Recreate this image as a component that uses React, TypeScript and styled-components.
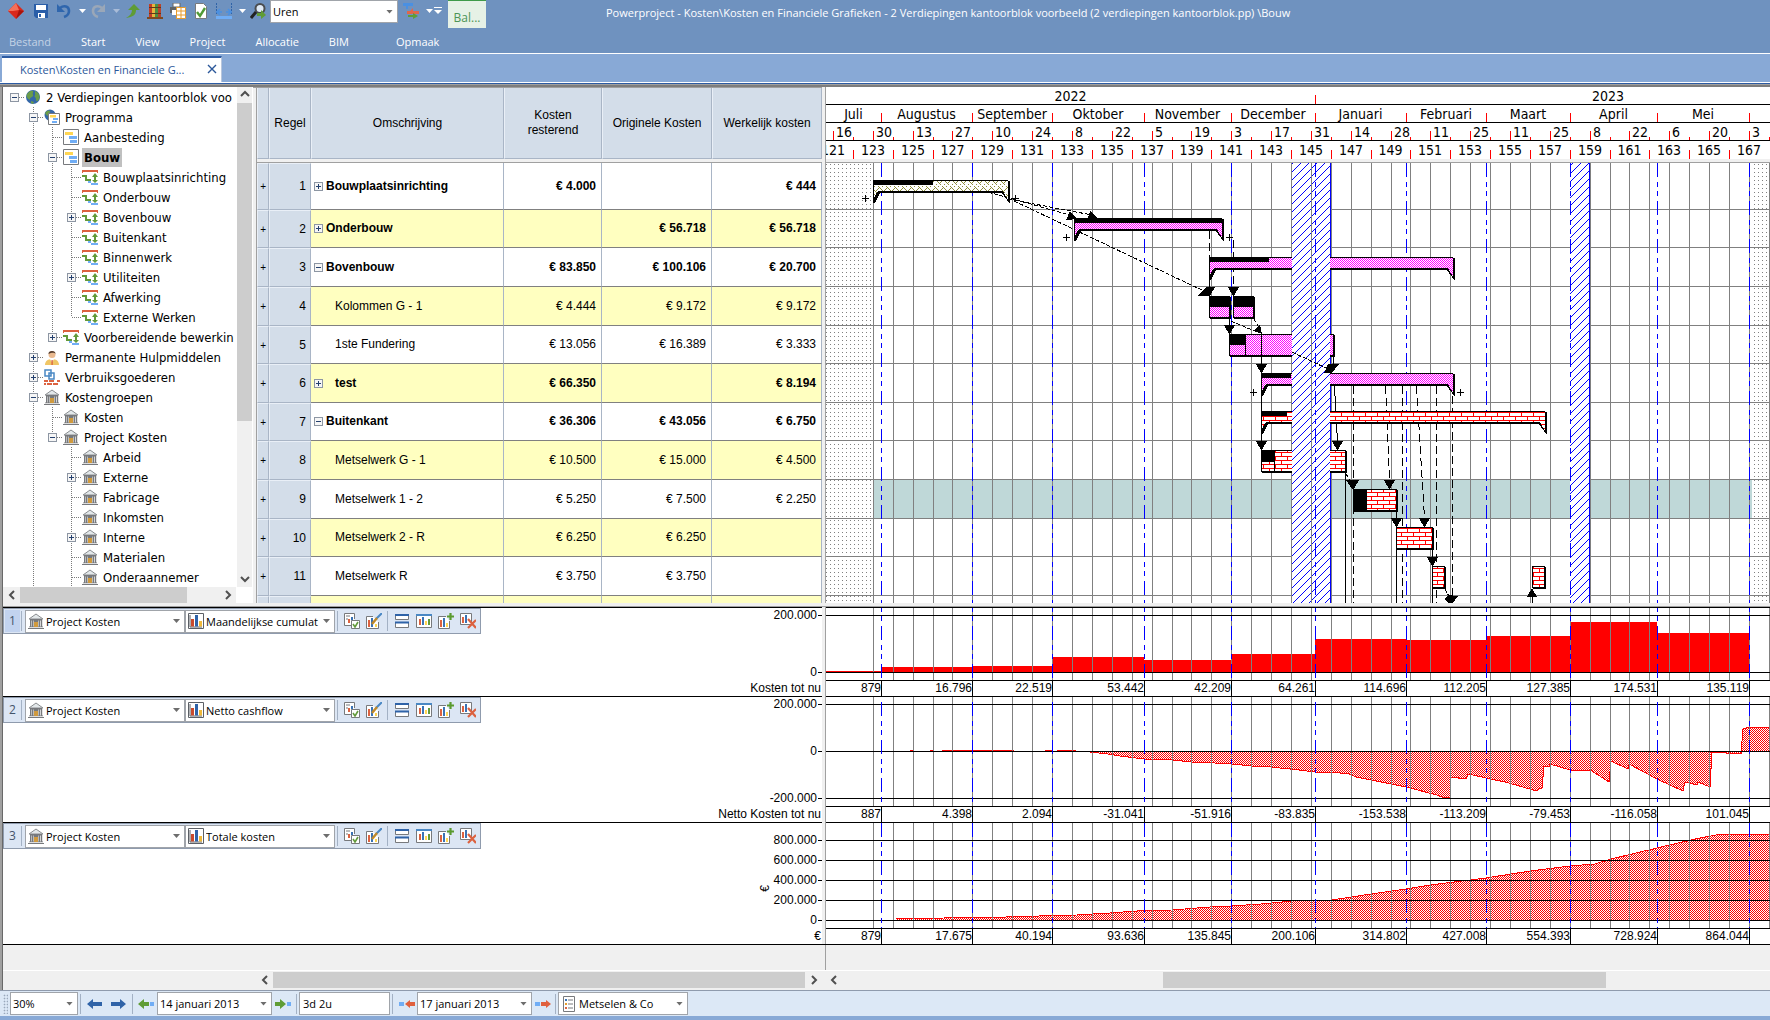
import React from "react";
import styled, { createGlobalStyle, css } from "styled-components";

const ui = `"Open Sans", "Noto Sans", sans-serif`;
const tahoma = `"DejaVu Sans Condensed", "DejaVu Sans", sans-serif`;
const arial = `"Liberation Sans", Arial, sans-serif`;

const Global = createGlobalStyle`
  * { box-sizing: border-box; }
  body { margin: 0; overflow: hidden; background: #f0f0f0; }
  button { border: 0; padding: 0; margin: 0; background: none; font: inherit; color: inherit; cursor: pointer; }
  svg { display: block; }
`;

const Shell = styled.div`
  display: flex;
  flex-direction: column;
  height: 100vh;
  font-family: ${ui};
  font-size: 11px;
  color: #000;
`;

/* ---------- ribbon ---------- */

const Ribbon = styled.header`
  background: #6f92bf;
  border-bottom: 1px solid #fff;
  color: #fff;
`;
const QuickBar = styled.div`
  display: flex;
  align-items: flex-start;
  height: 28px;
  padding-left: 3px;
`;
const QuickButton = styled.button<{ $w?: number }>`
  display: grid;
  place-items: center;
  width: ${(p) => p.$w ?? 23}px;
  height: 22px;
`;
const BalTab = styled.button`
  width: 38px;
  height: 28px;
  margin-left: 4px;
  padding-top: 6px;
  border-top: 1px solid #3f9a4a;
  background: #e6f1e6;
  color: #4c9455;
  font-size: 12px;
`;
const Title = styled.h1`
  flex: 1;
  margin: 0;
  padding-left: 120px;
  font-size: 11px;
  font-weight: 400;
  line-height: 26px;
  white-space: nowrap;
`;
const Menu = styled.nav`
  display: flex;
  gap: 30px;
  height: 25px;
  padding-left: 9px;
`;
const MenuItem = styled.button<{ $dim?: boolean; $push?: number }>`
  height: 27px;
  margin-right: ${(p) => p.$push ?? 0}px;
  color: ${(p) => (p.$dim ? "#c3d2e6" : "#fff")};
  line-height: 26px;
`;
const TabStrip = styled.div`
  display: flex;
  align-items: flex-end;
  height: 29px;
  padding-left: 2px;
  background: #88a9d6;
  border-bottom: 1px solid #fff;
`;
const DocTab = styled.div`
  display: flex;
  align-items: center;
  justify-content: space-between;
  width: 220px;
  height: 26px;
  padding: 0 4px 2px 18px;
  border-top: 2px solid #2c5ba3;
  border-right: 1px solid #b8c6dc;
  background: #fff;
  color: #2b579a;
`;
const Frame = styled.div`
  flex: none;
  height: 4px;
  border-top: 1px solid #2c5ba3;
  border-bottom: 2px solid #7d7d7d;
  background: #a0a0a0;
`;

/* ---------- panes ---------- */

const Work = styled.main`
  display: flex;
  flex: 1;
  flex-direction: column;
  min-height: 0;
  border-left: 2px solid #a0a0a0;
  box-shadow: inset 1px 0 0 #696969;
  padding-left: 1px;
`;
const Upper = styled.div`
  display: flex;
  flex: none;
  height: 516px;
  overflow: hidden;
`;
const TreePane = styled.aside`
  display: flex;
  flex: none;
  flex-direction: column;
  width: 250px;
  padding-right: 1px;
  background: #fff;
`;
const TreeMain = styled.div`
  display: flex;
  height: 500px;
`;
const TreeList = styled.ul`
  flex: 1;
  margin: 0;
  padding: 0 0 0 2px;
  list-style: none;
  overflow: hidden;
  font-family: ${tahoma};
  font-size: 13px;
`;
const TreeItem = styled.li`
  display: flex;
  align-items: center;
  height: 20px;
  white-space: nowrap;
`;
const vdots = "repeating-linear-gradient(to bottom,#7a7a7a 0 1px,transparent 1px 2px)";
const hdots = "repeating-linear-gradient(to right,#7a7a7a 0 1px,transparent 1px 2px)";
const Guide = styled.span<{ $v: "full" | "top" | "none"; $h: boolean }>`
  display: grid;
  flex: none;
  place-items: center;
  width: 19px;
  height: 20px;
  background-repeat: no-repeat;
  background-position: 9px 0, 10px 10px;
  ${(p) => css`
    background-image: ${vdots}, ${hdots};
    background-size: ${p.$v === "none" ? "0 0" : p.$v === "top" ? "1px 10px" : "1px 20px"},
      ${p.$h ? "9px 1px" : "0 0"};
  `}
`;
const Toggle = styled.button`
  width: 9px;
  height: 9px;
`;
const TreeIcon = styled.span`
  flex: none;
  width: 16px;
  height: 16px;
  margin: 0 3px 0 1px;
`;
const TreeLabel = styled.span<{ $sel?: boolean }>`
  height: 19px;
  padding: 0 2px;
  line-height: 19px;
  ${(p) => p.$sel && "background:#c0c0c0;font-weight:700;"}
`;
const VScroll = styled.div`
  display: flex;
  flex: none;
  flex-direction: column;
  width: 15px;
  background: #f0f0f0;
`;
const HScroll = styled.div<{ $w?: string }>`
  display: flex;
  width: ${(p) => p.$w ?? "auto"};
  height: 16px;
  background: #f0f0f0;
`;
const ScrollButton = styled.button`
  display: grid;
  flex: none;
  place-items: center;
  width: 17px;
  height: 16px;
`;
const UpDownButton = styled(ScrollButton)`
  width: 15px;
`;
const Track = styled.div<{ $before: number }>`
  display: flex;
  flex: 1;
  padding-left: ${(p) => p.$before}%;
`;
const Thumb = styled.div<{ $w?: string; $h?: string }>`
  width: ${(p) => p.$w ?? "100%"};
  height: ${(p) => p.$h ?? "100%"};
  background: #cdcdcd;
`;

/* ---------- table ---------- */

const TablePane = styled.section`
  flex: none;
  width: 569px;
  padding-left: 3px;
  border-top: 1px solid #a0a0a0;
  background: #f0f0f0;
`;
const Sheet = styled.table`
  width: 566px;
  table-layout: fixed;
  border-collapse: separate;
  border-spacing: 0;
  border-left: 1px solid #a0a0a0;
  font-family: ${arial};
  font-size: 12px;
  line-height: 15px;
`;
const Th = styled.th`
  height: 71px;
  padding: 0 4px;
  border-right: 1px solid #a9b5c6;
  border-bottom: 1px solid #a9b5c6;
  border-left: 1px solid #e9eff7;
  background: #d3dde9;
  font-weight: 400;
`;
const SplitCell = styled.td`
  height: 4px;
  padding: 0;
  border-bottom: 1px solid #a0a0a0;
  background: #f0f0f0;
`;
const SheetRow = styled.tr<{ $h: number; $bold?: boolean }>`
  height: ${(p) => p.$h}px;
  font-weight: ${(p) => (p.$bold ? 700 : 400)};
`;
const HeadCell = styled.td<{ $mark?: boolean }>`
  padding: 0 ${(p) => (p.$mark ? 2 : 4)}px 0 0;
  border: 1px solid;
  border-color: #e9eff7 #a9b5c6 #a9b5c6 #e9eff7;
  background: #d3dde9;
  font-size: ${(p) => (p.$mark ? 10 : 12)}px;
  font-weight: 400;
  text-align: right;
`;
const Cell = styled.td<{ $alt?: boolean }>`
  padding: 0 5px 0 0;
  border-right: 1px solid #a9b5c6;
  border-bottom: 1px solid #808080;
  background: ${(p) => (p.$alt ? "#ffffc0" : "#fff")};
  text-align: right;
`;
const NameFlex = styled.div<{ $child?: boolean }>`
  display: flex;
  align-items: center;
  gap: ${(p) => (p.$child ? 12 : 3)}px;
  padding-left: 3px;
`;
const BoxSlot = styled.span`
  width: 9px;
  height: 9px;
`;

/* ---------- gantt ---------- */

const Divider = styled.div`
  flex: none;
  width: 4px;
  border-right: 1px solid #a0a0a0;
  background: #f0f0f0;
`;
const GanttPane = styled.section`
  flex: 1;
  min-width: 0;
  overflow: hidden;
  background: #fff;
`;
const Scale = styled.div`
  height: 72px;
  overflow: hidden;
  font-family: ${tahoma};
  font-size: 14px;
`;
const ScaleRow = styled.div<{ $last?: boolean }>`
  display: flex;
  justify-content: flex-start;
  height: 18px;
  overflow: hidden;
  border-bottom: ${(p) => (p.$last ? "0" : "1px solid #000")};
  line-height: 18px;
  white-space: nowrap;
`;
const ScaleCell = styled.div<{ $w: number; $tick: number; $align?: string; $before?: number }>`
  flex: none;
  width: ${(p) => p.$w}px;
  margin-left: -${(p) => p.$before ?? 0}px;
  padding-left: ${(p) => (p.$align ? 3 : 0)}px;
  background: linear-gradient(#f00, #f00) no-repeat left bottom / 1px ${(p) => p.$tick}px;
  text-align: ${(p) => p.$align ?? "center"};
`;
const ScaleSplit = styled.div`
  height: 4px;
  border-bottom: 1px solid #a0a0a0;
  background: #f0f0f0;
`;

/* ---------- graphs ---------- */

const Graphs = styled.section`
  flex: none;
  margin-top: 3px;
  border-top: 1px solid #a0a0a0;
  border-bottom: 1px solid #000;
  background: #fff;
`;
const GraphRow = styled.div<{ $h: number }>`
  display: flex;
  height: ${(p) => p.$h}px;
`;
const GraphLeft = styled.div`
  display: flex;
  flex: none;
  flex-direction: column;
  justify-content: space-between;
  width: 819px;
  border-top: 1px solid #000;
`;
const GraphTop = styled.div`
  display: flex;
  align-items: flex-start;
  justify-content: space-between;
`;
const GraphCaption = styled.div`
  height: 16px;
  padding-right: 1px;
  font: 12px/16px ${arial};
  text-align: right;
`;
const GraphRight = styled.div`
  flex: 1;
  min-width: 0;
  overflow: hidden;
  border-top: 1px solid #000;
`;
const Values = styled.div`
  display: flex;
  height: 16px;
  overflow: hidden;
  border-top: 1px solid #000;
  font: 12px/15px ${arial};
`;
const Value = styled.div<{ $w: number }>`
  flex: none;
  width: ${(p) => p.$w}px;
  border-right: 1px solid #000;
  text-align: right;
`;
const GraphBar = styled.div`
  display: flex;
  align-items: center;
  width: 478px;
  height: 26px;
  border: 1px solid #8f9bad;
  background: #dce6f4;
`;
const GraphNo = styled.span<{ $on?: boolean }>`
  width: 15px;
  height: 22px;
  margin-left: 1px;
  background: ${(p) => (p.$on ? "#c2d3ef" : "none")};
  color: #44546a;
  font-size: 12px;
  line-height: 22px;
  text-align: center;
`;
const Sep = styled.span<{ $l?: number; $r?: number }>`
  flex: none;
  width: 1px;
  height: 20px;
  margin: 0 ${(p) => p.$r ?? 2}px 0 ${(p) => p.$l ?? 2}px;
  background: #a3b1c4;
`;
const Combo = styled.label<{ $w: number }>`
  display: flex;
  flex: none;
  align-items: center;
  width: ${(p) => p.$w}px;
  height: 23px;
  border: 1px solid #a0a4aa;
  background: #fff;
  & > svg:first-child { margin-left: 2px; flex: none; }
`;
const QuickCombo = styled(Combo)`
  margin: 0 1px;
`;
const Select = styled.select`
  flex: 1;
  min-width: 0;
  height: 100%;
  padding: 0 0 0 2px;
  border: 0;
  outline: 0;
  appearance: none;
  background: transparent;
  color: #000;
  font: 11px ${ui};
`;
const Arrow = styled.span<{ $c?: string }>`
  flex: none;
  width: 7px;
  height: 4px;
  margin: 0 4px;
  background: ${(p) => p.$c ?? "#6d6d6d"};
  clip-path: polygon(0 0, 100% 0, 50% 100%);
`;
const ToolButton = styled.button`
  display: grid;
  place-items: center;
  width: 22px;
  height: 22px;
`;

/* ---------- footer ---------- */

const Filler = styled.div`
  display: flex;
  flex: 1;
  padding-left: 819px;
`;
const ScrollRow = styled.div`
  display: flex;
  flex: none;
  height: 20px;
  padding-top: 1px;
  border-top: 1px solid #fff;
`;
const ScrollLeft = styled.div`
  flex: none;
  width: 819px;
  padding-left: 253px;
`;
const ScrollRight = styled.div`
  flex: 1;
  padding-left: 3px;
`;
const StatusBar = styled.footer`
  display: flex;
  flex: none;
  align-items: center;
  height: 30px;
  padding-left: 3px;
  border-top: 1px solid #8f9bad;
  border-bottom: 4px solid #88a9d6;
  background: #dce8f6;
`;
const Grip = styled.span`
  width: 5px;
  height: 20px;
  margin-right: 2px;
  background: radial-gradient(#9aa8bb 40%, transparent 50%) 0 0 / 3px 3px;
`;
const Field = styled.input`
  width: 91px;
  height: 23px;
  padding: 0 3px;
  border: 1px solid #a0a4aa;
  background: #fff;
  font: 11px ${ui};
`;
const StatusButton = styled.button<{ $w?: number }>`
  display: grid;
  place-items: center;
  width: ${(p) => p.$w ?? 21}px;
  height: 22px;
`;

/* ---------- icons ---------- */

const Svg = ({ children, w = 16, h = 16 }: { children: React.ReactNode; w?: number; h?: number }) => (
  <svg width={w} height={h} viewBox={`0 0 ${w} ${h}`} aria-hidden="true">
    {children}
  </svg>
);

const Bank = () => (
  <Svg>
    <path d="M1 6L8 1l7 5z" fill="#e3e8ea" stroke="#8a8d90" strokeWidth="1" />
    <path d="M2 6h12v1.500H2zM0 15h16v1H0zM1 13.500h14v.8H1z" fill="#77797c" />
    <path d="M2 7h1.500v7H2zM4 7h1.500v7H4zM10.500 7H12v7h-1.500zM12.700 7h1.500v7h-1.500zM6 7h4v2H6z" fill="#77797c" />
    <path d="M6 9h4v5H6z" fill="#d09a3e" />
  </Svg>
);
const Globe = () => (
  <Svg>
    <circle cx="8" cy="8" r="7" fill="#3467a8" />
    <path d="M2 5c2-3 5-4 6-3s-1 2 0 4-3 2-3 4-3-1-3.500-3zM10 2c3 1 5 4 4.500 7-1 2-2 4-3 3s0-3-1.500-4 1-2 0-3zM6 12l3 1-1 2-2-1z" fill="#6a9c4a" />
  </Svg>
);
const ProgIcon = () => (
  <Svg>
    <circle cx="6" cy="6" r="5.500" fill="#3467a8" />
    <path d="M1 4c2-3 4-3 5-2s-2 2-1 4-3 1-4-2z" fill="#6a9c4a" />
    <path d="M4.500 4.500h11v11h-11z" fill="#fff" stroke="#77797c" />
    <path d="M6 6h6v2.500H6z" fill="#ffd653" />
    <path d="M9 9h5v2H9zM8 12h5v2H8z" fill="#70adf5" />
  </Svg>
);
const PlanIcon = () => (
  <Svg>
    <path d="M.5.5h15v15H.5z" fill="#fff" stroke="#77797c" />
    <path d="M2 3h8v3H2z" fill="#ffd653" />
    <path d="M6 7h8v3H6zM7 11h7v3H7z" fill="#70adf5" />
  </Svg>
);
const TaskIcon = () => (
  <Svg>
    <path d="M0 1h16v3h-1V3H1v1H0z" fill="#dc6240" />
    <path d="M0 7h4v4h5" fill="none" stroke="#629a3b" strokeWidth="2" />
    <path d="M13 4l3 4h-2v3h2l-3 3-3-3h2V8h-2z" fill="#629a3b" />
    <path d="M6 12h3v2h7v2H9v-2H6z" fill="#70adf5" />
  </Svg>
);
const Person = () => (
  <Svg>
    <path d="M1 16c0-4 3-6 7-6s7 2 7 6z" fill="#f0c665" />
    <path d="M5 9l3 4 3-4z" fill="#fff" />
    <path d="M7.500 11h1.200v5H7.500z" fill="#d8553a" />
    <circle cx="8" cy="5.500" r="3.500" fill="#e9b98f" />
    <path d="M4.500 5C4 1 12 1 11.500 5 10 3 7 4 4.500 5z" fill="#503a2c" />
  </Svg>
);
const Bricks = () => (
  <Svg>
    <path d="M1 1h6v6H1zM5 4h5v6H5z" fill="none" stroke="#4a88c4" strokeWidth="1.500" />
    <path d="M0 11h4v2H0zM5 11h5v2H5zM13 11h3v2h-3zM0 14h2v2H0zM3 14h5v2H3zM9 14h5v2H9z" fill="#dc6240" />
  </Svg>
);
const BoxIcon = ({ open }: { open: boolean }) => (
  <Svg w={9} h={9}>
    <path d="M.5.5h8v8h-8z" fill="#f6f6f6" stroke="#8d96a3" shapeRendering="crispEdges" />
    <path d={open ? "M2 4h5v1H2z" : "M2 4h5v1H2zM4 2h1v5H4z"} fill="#24406e" />
  </Svg>
);
const ChartIcon = () => (
  <Svg>
    <path d="M.5.5h15v15H.5z" fill="#fff" stroke="#5c6066" />
    <path d="M2 2v12h12" fill="none" stroke="#5c6066" />
    <path d="M3 6h3v7.500H3z" fill="#c94a2c" />
    <path d="M7 2h3v11.500H7z" fill="#2f63a8" />
    <path d="M11 8h3v5.500h-3z" fill="#f0b93a" />
  </Svg>
);
const ReportCheck = () => (
  <Svg>
    <path d="M8 12.500H.5V.5h10V6" fill="#fff" stroke="#77797c" />
    <path d="M2 3h4M2 6h2" stroke="#77797c" />
    <path d="M4 6h2v4H4z" fill="#dc6240" />
    <path d="M7 4h2v3H7z" fill="#3a73b5" />
    <path d="M7.500 7.500h8v8h-8z" fill="#fff" stroke="#77797c" />
    <path d="M9 11l2 3 3-5" fill="none" stroke="#629a3b" strokeWidth="1.600" />
  </Svg>
);
const ChartPen = () => (
  <Svg>
    <path d="M12.500 9v6.500H.5v-12H7" fill="#fff" stroke="#77797c" />
    <path d="M2 7h2v7H2z" fill="#dc6240" />
    <path d="M5 5h2v9H5z" fill="#3a73b5" />
    <path d="M9 11h2v3H9z" fill="#ffd653" />
    <path d="M16 0l-6 6" stroke="#4a88c4" strokeWidth="2" />
    <path d="M11 5L6 11" stroke="#c0892a" strokeWidth="2.500" />
  </Svg>
);
const SplitIcon = () => (
  <Svg>
    <path d="M1.500 1.500h13v5h-13zM1.500 9.500h13v5h-13z" fill="#fff" stroke="#77797c" />
    <path d="M1 1h14v2H1zM1 8.500h14v2H1z" fill="#2f63a8" />
  </Svg>
);
const ChartWin = () => (
  <Svg>
    <path d="M.5 1.500h15v13H.5z" fill="#fff" stroke="#77797c" />
    <path d="M0 1h16v2H0z" fill="#4a88c4" />
    <path d="M3 6h2v6H3z" fill="#dc6240" />
    <path d="M6 4h2v8H6z" fill="#3a73b5" />
    <path d="M9 8h2v4H9z" fill="#ffd653" />
    <path d="M12 6h2v6h-2z" fill="#629a3b" />
  </Svg>
);
const ChartAdd = () => (
  <Svg>
    <path d="M11.500 8v7.500H.5v-12H8" fill="#fff" stroke="#77797c" />
    <path d="M2 7h2v7H2z" fill="#dc6240" />
    <path d="M5 5h2v9H5z" fill="#3a73b5" />
    <path d="M8 10h2v4H8z" fill="#ffd653" />
    <path d="M12.500 0v7M9 3.500h7" stroke="#5a9a2e" strokeWidth="2.200" />
  </Svg>
);
const ChartDel = () => (
  <Svg>
    <path d="M.5.5h11v11H.5z" fill="#fff" stroke="#77797c" />
    <path d="M2 4h2v6H2z" fill="#dc6240" />
    <path d="M5 2h2v8H5z" fill="#3a73b5" />
    <path d="M8 6l8 9M16 7l-8 8" stroke="#dc6240" strokeWidth="2.200" />
  </Svg>
);
const Diamond = () => (
  <Svg>
    <path d="M8 0l8 8-8 8-8-8z" fill="#d9281c" />
    <path d="M8 0l3 7-6 1-5 0z" fill="#f4705a" />
    <path d="M8 16l3-9 5 1z" fill="#a8130c" />
  </Svg>
);
const Save = () => (
  <Svg>
    <path d="M1 1h14v14H3l-2-2z" fill="#2a5ea8" />
    <path d="M3 2h10v5H3z" fill="#fff" />
    <path d="M5 10h7v5H5z" fill="#fff" />
    <path d="M6 11h2v3H6z" fill="#2a5ea8" />
  </Svg>
);
const Undo = ({ c, flip }: { c: string; flip?: boolean }) => (
  <Svg>
    <g transform={flip ? "translate(16 0) scale(-1 1)" : undefined}>
      <path d="M1 1v8h8z" fill={c} />
      <path d="M4 5c4-3 9-2 9 3 0 3-2 5-5 6" fill="none" stroke={c} strokeWidth="2.600" />
    </g>
  </Svg>
);
const UpArrow = () => (
  <Svg>
    <path d="M10 1l6 6h-4c0 5-3 7-10 8 4-2 6-5 6-8H4z" fill="#5f9c35" />
  </Svg>
);
const Books = () => (
  <Svg>
    <path d="M2 1h3v13H2z" fill="#c33d27" />
    <path d="M5 1h3v13H5z" fill="#e9b43d" />
    <path d="M8 1h3v13H8z" fill="#4b9142" />
    <path d="M11 1h3v13h-3z" fill="#b9452c" />
    <path d="M2 4h12v1H2zM2 10h12v1H2z" fill="#5b3a1e" />
    <path d="M0 14h16v2H0z" fill="#7c4a22" />
  </Svg>
);
const PrintGrid = () => (
  <Svg>
    <path d="M3 0h7v4H3z" fill="#fff" stroke="#666" />
    <path d="M0 4h10v6H0z" fill="#5f6468" />
    <path d="M2 7h7v5H2z" fill="#fff" />
    <path d="M6.500 4.500h9v11h-9z" fill="#fff" stroke="#e79c2c" />
    <path d="M7 8h8M7 12h8M11 5v10" stroke="#e79c2c" />
  </Svg>
);
const DocCheck = () => (
  <Svg>
    <path d="M2.500.5h8l3 3v12h-11z" fill="#fff" stroke="#77797c" />
    <path d="M4 9l3 4 5-8" fill="none" stroke="#4f9a35" strokeWidth="2.400" />
  </Svg>
);
const FitIcon = () => (
  <Svg>
    <path d="M.5 0v12M15.500 0v12" stroke="#2f63a8" strokeDasharray="2 1" />
    <path d="M0 13h16v3H0z" fill="#70adf5" />
    <path d="M1 9h5M10 9h5M4 6L1 9l3 3M12 6l3 3-3 3" fill="none" stroke="#4a90e2" strokeWidth="1.600" />
  </Svg>
);
const Finder = () => (
  <Svg>
    <circle cx="10" cy="5.500" r="4.500" fill="#dfe9f4" stroke="#4a4d50" strokeWidth="2" />
    <path d="M6 9l-5 6" stroke="#222" strokeWidth="3" />
    <path d="M7 10h4V7l5 5-5 4v-3H7z" fill="#5f9c35" />
  </Svg>
);
const Reassign = () => (
  <Svg>
    <path d="M0 0h10v3H5v3H3V3H0z" fill="#4a90e2" />
    <path d="M4 8h12v3H4zM10 5l-3 3h3z" fill="#e0664a" />
    <path d="M5 12h5v-2l5 3-5 3v-2H5z" fill="#5f9c35" />
  </Svg>
);
const arrowPath = (left?: boolean, square?: "l" | "r") => {
  if (!square) return left ? "M0 8l6-5v3h9v4H6v3z" : "M15 8L9 3v3H0v4h9v3z";
  if (square === "r") return left ? "M0 8l6-5v3h5v4H6v3z" : "M11 8L5 3v3H0v4h5v3z";
  return left ? "M7 8l5-4v2h5v4h-5v2z" : "M17 8l-5-4v2H7v4h5v2z";
};
const HArrow = ({ c, left, square }: { c: string; left?: boolean; square?: "l" | "r" }) => (
  <Svg w={17}>
    <path d={arrowPath(left, square)} fill={c} />
    {square && <path d={square === "r" ? "M12 6h4v4h-4z" : "M1 6h5v4H1z"} fill="#70adf5" />}
  </Svg>
);
const ListIcon = () => (
  <Svg>
    <path d="M2.500.5h11v15h-11z" fill="#fff" stroke="#77797c" />
    <path d="M4 3h2v2H4z" fill="#3a73b5" />
    <path d="M4 7h2v2H4z" fill="#e79c2c" />
    <path d="M4 11h2v2H4z" fill="#dc6240" />
    <path d="M7 4h5M7 8h5M7 12h5" stroke="#77797c" />
  </Svg>
);
const Chevron = ({ dir }: { dir: "up" | "down" | "left" | "right" }) => {
  const d = { up: "M1 6l4-4 4 4", down: "M1 3l4 4 4-4", left: "M7 1L3 5l4 4", right: "M3 1l4 4-4 4" }[dir];
  return (
    <Svg w={10} h={10}>
      <path d={d} fill="none" stroke="#505050" strokeWidth="2" />
    </Svg>
  );
};

/* ---------- tree data ---------- */

type Node = { l: number; t: string; i: React.ReactNode; s?: "+" | "-"; sel?: boolean };
const tree: Node[] = [
  { l: 0, t: "2 Verdiepingen kantoorblok voo", i: <Globe />, s: "-" },
  { l: 1, t: "Programma", i: <ProgIcon />, s: "-" },
  { l: 2, t: "Aanbesteding", i: <PlanIcon /> },
  { l: 2, t: "Bouw", i: <PlanIcon />, s: "-", sel: true },
  { l: 3, t: "Bouwplaatsinrichting", i: <TaskIcon /> },
  { l: 3, t: "Onderbouw", i: <TaskIcon /> },
  { l: 3, t: "Bovenbouw", i: <TaskIcon />, s: "+" },
  { l: 3, t: "Buitenkant", i: <TaskIcon /> },
  { l: 3, t: "Binnenwerk", i: <TaskIcon /> },
  { l: 3, t: "Utiliteiten", i: <TaskIcon />, s: "+" },
  { l: 3, t: "Afwerking", i: <TaskIcon /> },
  { l: 3, t: "Externe Werken", i: <TaskIcon /> },
  { l: 2, t: "Voorbereidende bewerkin", i: <TaskIcon />, s: "+" },
  { l: 1, t: "Permanente Hulpmiddelen", i: <Person />, s: "+" },
  { l: 1, t: "Verbruiksgoederen", i: <Bricks />, s: "+" },
  { l: 1, t: "Kostengroepen", i: <Bank />, s: "-" },
  { l: 2, t: "Kosten", i: <Bank /> },
  { l: 2, t: "Project Kosten", i: <Bank />, s: "-" },
  { l: 3, t: "Arbeid", i: <Bank /> },
  { l: 3, t: "Externe", i: <Bank />, s: "+" },
  { l: 3, t: "Fabricage", i: <Bank /> },
  { l: 3, t: "Inkomsten", i: <Bank /> },
  { l: 3, t: "Interne", i: <Bank />, s: "+" },
  { l: 3, t: "Materialen", i: <Bank /> },
  { l: 3, t: "Onderaannemer", i: <Bank /> },
];
/* levels of the visible rows followed by those scrolled out below */
const levels = [...tree.map((n) => n.l), 3, 1];
const continues = (row: number, level: number) => {
  for (let j = row + 1; j < levels.length; j++) {
    if (levels[j] === level) return true;
    if (levels[j] < level) return false;
  }
  return false;
};

const Tree = () => (
  <TreePane>
    <TreeMain>
      <TreeList>
        {tree.map((n, r) => (
          <TreeItem key={n.t + r}>
            {Array.from({ length: n.l + 1 }, (_, k) => {
              const own = k === n.l;
              const more = k > 0 && continues(r, k);
              return (
                <Guide key={k} $h={own} $v={more ? "full" : own && k > 0 ? "top" : "none"}>
                  {own && n.s && (
                    <Toggle aria-label={n.t}>
                      <BoxIcon open={n.s === "-"} />
                    </Toggle>
                  )}
                </Guide>
              );
            })}
            <TreeIcon>{n.i}</TreeIcon>
            <TreeLabel $sel={n.sel}>{n.t}</TreeLabel>
          </TreeItem>
        ))}
      </TreeList>
      <VScroll>
        <UpDownButton aria-label="Omhoog"><Chevron dir="up" /></UpDownButton>
        <Track $before={0}><Thumb $h="68%" /></Track>
        <UpDownButton aria-label="Omlaag"><Chevron dir="down" /></UpDownButton>
      </VScroll>
    </TreeMain>
    <HScroll $w="233px">
      <ScrollButton aria-label="Links"><Chevron dir="left" /></ScrollButton>
      <Track $before={0}><Thumb $w="167px" /></Track>
      <ScrollButton aria-label="Rechts"><Chevron dir="right" /></ScrollButton>
    </HScroll>
  </TreePane>
);

/* ---------- sheet data ---------- */

type Task = { h: number; t: string; s?: "+" | "-"; b?: boolean; c?: boolean; v: [string, string, string] };
const tasks: Task[] = [
  { h: 47, t: "Bouwplaatsinrichting", s: "+", b: true, v: ["€ 4.000", "", "€ 444"] },
  { h: 38, t: "Onderbouw", s: "+", b: true, v: ["", "€ 56.718", "€ 56.718"] },
  { h: 39, t: "Bovenbouw", s: "-", b: true, v: ["€ 83.850", "€ 100.106", "€ 20.700"] },
  { h: 39, t: "Kolommen G - 1", c: true, v: ["€ 4.444", "€ 9.172", "€ 9.172"] },
  { h: 38, t: "1ste Fundering", c: true, v: ["€ 13.056", "€ 16.389", "€ 3.333"] },
  { h: 39, t: "test", s: "+", b: true, c: true, v: ["€ 66.350", "", "€ 8.194"] },
  { h: 38, t: "Buitenkant", s: "-", b: true, v: ["€ 36.306", "€ 43.056", "€ 6.750"] },
  { h: 39, t: "Metselwerk G - 1", c: true, v: ["€ 10.500", "€ 15.000", "€ 4.500"] },
  { h: 39, t: "Metselwerk 1 - 2", c: true, v: ["€ 5.250", "€ 7.500", "€ 2.250"] },
  { h: 38, t: "Metselwerk 2 - R", c: true, v: ["€ 6.250", "€ 6.250", ""] },
  { h: 39, t: "Metselwerk R", c: true, v: ["€ 3.750", "€ 3.750", ""] },
];

const SheetView = () => (
  <TablePane>
    <Sheet>
      <colgroup>
        {[12, 42, 193, 98, 110, 110].map((w, i) => <col key={i} width={w} />)}
      </colgroup>
      <thead>
        <tr>
          <Th />
          <Th>Regel</Th>
          <Th>Omschrijving</Th>
          <Th>Kosten resterend</Th>
          <Th>Originele Kosten</Th>
          <Th>Werkelijk kosten</Th>
        </tr>
        <tr><SplitCell colSpan={6} /></tr>
      </thead>
      <tbody>
        {tasks.map((t, i) => (
          <SheetRow key={t.t} $h={t.h} $bold={t.b}>
            <HeadCell $mark>+</HeadCell>
            <HeadCell>{i + 1}</HeadCell>
            <Cell $alt={i % 2 === 1}>
              <NameFlex $child={t.c}>
                <BoxSlot>{t.s && <BoxIcon open={t.s === "-"} />}</BoxSlot>
                {t.t}
              </NameFlex>
            </Cell>
            {t.v.map((v, k) => <Cell key={k} $alt={i % 2 === 1}>{v}</Cell>)}
          </SheetRow>
        ))}
        <SheetRow $h={38}>
          <HeadCell /><HeadCell /><Cell $alt /><Cell $alt /><Cell $alt /><Cell $alt />
        </SheetRow>
      </tbody>
    </Sheet>
  </TablePane>
);

/* ---------- time scale ---------- */

const LEFT = 826;
const weekX = (i: number) => 873 + 20 * i - [4, 16, 27, 38].filter((k) => k <= i).length;
const weeks = Array.from({ length: 46 }, (_, i) => weekX(i));
const monthX = [881, 972, 1052, 1144, 1231, 1315, 1406, 1486, 1570, 1657, 1749];
const monthNames = ["Juli", "Augustus", "September", "Oktober", "November", "December", "Januari", "Februari", "Maart", "April", "Mei"];
const monthW = monthX.map((x, i) => x - (i ? monthX[i - 1] : LEFT));
const days = ["16", "30", "13", "27", "10", "24", "8", "22", "5", "19", "3", "17", "31", "14", "28", "11", "25", "11", "25", "8", "22", "6", "20", "3"];

const TimeScale = () => (
  <Scale>
    <ScaleRow>
      <ScaleCell $w={489} $tick={0}>2022</ScaleCell>
      <ScaleCell $w={586} $tick={9}>2023</ScaleCell>
    </ScaleRow>
    <ScaleRow>
      {monthNames.map((m, i) => <ScaleCell key={m} $w={monthW[i]} $tick={i ? 9 : 0}>{m}</ScaleCell>)}
      <ScaleCell $w={80} $tick={9} />
    </ScaleRow>
    <ScaleRow>
      <ScaleCell $w={7} $tick={0} />
      {days.map((d, k) => {
        const i = 2 * k - 2;
        const mid = i < 0 ? 20 : weekX(i + 1) - weekX(i);
        return (
          <React.Fragment key={k}>
            <ScaleCell $w={mid} $tick={9} $align="left">{d}</ScaleCell>
            <ScaleCell $w={weekX(i + 2) - (i < 0 ? 853 : weekX(i + 1))} $tick={3} />
          </React.Fragment>
        );
      })}
    </ScaleRow>
    <ScaleRow $last>
      <ScaleCell $w={40} $tick={0} $before={13}>121</ScaleCell>
      {Array.from({ length: 23 }, (_, k) => {
        const a = k ? weekX(2 * k - 1) : 853;
        return <ScaleCell key={k} $w={weekX(2 * k + 1) - a} $tick={9}>{123 + 2 * k}</ScaleCell>;
      })}
    </ScaleRow>
  </Scale>
);

/* ---------- gantt drawing ---------- */

const rowLines = [209, 247, 286, 325, 363, 402, 440, 479, 518, 556, 595];
const dash = "14 5 5 4 5 5";

const Patterns = () => (
  <defs>
    <pattern id="mag" width="2" height="2" patternUnits="userSpaceOnUse">
      <path d="M0 0h2v2H0z" fill="#fff" /><path d="M0 0h1v1H0zM1 1h1v1H1z" fill="#f0f" />
    </pattern>
    <pattern id="red" width="2" height="2" patternUnits="userSpaceOnUse">
      <path d="M0 0h2v2H0z" fill="#fff" /><path d="M0 0h1v1H0zM1 1h1v1H1z" fill="#f00" />
    </pattern>
    <pattern id="olive" width="8" height="8" patternUnits="userSpaceOnUse">
      <path d="M0 0h8v8H0z" fill="#fff" />
      <path d="M0 0h1v1H0zM2 2h1v1H2zM4 0h1v1H4zM6 2h1v1H6zM0 4h1v1H0zM1 5h1v1H1zM2 6h1v1H2zM3 7h1v1H3zM4 6h1v1H4zM5 5h1v1H5zM6 4h1v1H6zM7 3h1v1H7z" fill="#8c8c3c" />
    </pattern>
    <pattern id="brick" width="12" height="8" patternUnits="userSpaceOnUse">
      <path d="M0 0h12v8H0z" fill="#fff" />
      <path d="M0 0h12v1H0zM0 4h12v1H0zM3 0h1v4H3zM9 4h1v4H9z" fill="#f00" />
    </pattern>
    <pattern id="dots" x="826" y="164" width="4" height="4" patternUnits="userSpaceOnUse">
      <path d="M0 0h1v1H0z" fill="#808080" />
    </pattern>
    <pattern id="hatch" width="8" height="8" patternUnits="userSpaceOnUse">
      <path d="M0 0h8v8H0z" fill="#fff" />
      <path d="M0 7h1v1H0zM1 6h1v1H1zM2 5h1v1H2zM3 4h1v1H3zM4 3h1v1H4zM5 2h1v1H5zM6 1h1v1H6zM7 0h1v1H7z" fill="#00f" />
    </pattern>
  </defs>
);

const Summary = ({ a, b, y, p, f }: { a: number; b: number; y: number; p: number; f: string }) => (
  <g>
    <path d={`M${a} ${y}H${b}V${y + 22}L${b - 6} ${y + 11}H${a + 6}L${a} ${y + 22}z`} fill={`url(#${f})`} />
    <path d={`M${a} ${y}h${b - a}v1H${a}zM${a} ${y}h1v22h-1zM${a} ${y}H${p}v5H${a}z`} />
    <path d={`M${a} ${y + 23}v-4l5-8H${b - 5}l5 9V${y + 1}h2V${y + 23}h-1l-7-10H${a + 7}l-5 10z`} />
  </g>
);
const Bar = ({ a, b, y, f, p = 0, ph = 0, mark }: { a: number; b: number; y: number; f: string; p?: number; ph?: number; mark?: boolean }) => (
  <g>
    <path d={`M${a} ${y}H${b}v22H${a}z`} fill={`url(#${f})`} />
    <path d={`M${a} ${y}H${b}v1H${a}zM${a} ${y}h1v22h-1zM${b - 1} ${y + 1}h2v22h-2zM${a + 1} ${y + 21}H${b}v2H${a + 1}z`} />
    {p > 0 && <path d={`M${a} ${y}h${p}v${ph}h-${p}z`} />}
    {mark && <path d={`M${a + p} ${y}h1v22h-1z`} />}
  </g>
);
const Down = ({ x, y }: { x: number; y: number }) => <path d={`M${x - 5} ${y - 9}h11L${x + 1} ${y}h-1z`} />;
const Plus = ({ x, y }: { x: number; y: number }) => (
  <path d={`M${x - 3} ${y}h7v1h-7zM${x} ${y - 3}h1v7h-1z`} />
);

const GanttChart = () => (
  <svg width="100%" height="440" shapeRendering="crispEdges" role="img" aria-label="Balkenschema">
    <Patterns />
    <g transform="translate(-826 -163)">
      <path d="M826 163h47v440h-47zM1754 163h1000v440H1754z" fill="url(#dots)" />
      <path d="M873 480h879v38H873z" fill="#bfd8d8" />
      {weeks.map((x) => <path key={x} d={`M${x} 163h1v440h-1z`} fill="#808080" />)}
      {rowLines.map((y) => <path key={y} d={`M826 ${y}h2000v1H826z`} fill="#808080" />)}
      <path d="M1291 163h40v440h-40zM1570 163h20v440h-20z" fill="url(#hatch)" />
      <path d="M1291 163h1v440h-1zM1311 163h1v440h-1z" fill="#808080" />
      {monthX.map((x) => <path key={x} d={`M${x + 0.5} 163V603`} stroke="#00f" strokeDasharray={dash} />)}
      <path d="M1330 163h1v440h-1zM1589 163h1v440h-1z" fill="#00f" />

      <g stroke="#000" fill="none" strokeDasharray="4 2">
        <path d="M988 192l78 22M1008 199l84 16M1014 201l192 91M1231 321l26 11M1254 319l6 10M1346 474l5 8M1445 589l5 9" />
      </g>
      <g stroke="#000" fill="none" strokeDasharray="8 4">
        <path d="M1209.500 231v57M1233.500 240v48M1353.500 386v217M1402.500 386v217M1436.500 386v217M1452.500 396v207M1385.500 386l4 94M1416.500 386l8 132" />
      </g>
      <path d="M1261.500 334v107M1229.500 318v8M1334.500 386l3 56M1345.500 473v130M1396.500 511v92M1432.500 550v53M1532.500 595v8M1333.500 357v8" stroke="#000" fill="none" />

      <Summary a={873} b={1008} y={180} p={933} f="olive" />
      <Summary a={1074} b={1222} y={218} p={1222} f="mag" />
      <Summary a={1209} b={1453} y={257} p={1269} f="mag" />
      <Bar a={1209} b={1230} y={296} f="mag" p={21} ph={11} />
      <Bar a={1233} b={1254} y={296} f="mag" p={21} ph={11} />
      <Bar a={1229} b={1334} y={334} f="mag" p={16} ph={11} mark />
      <Summary a={1261} b={1453} y={373} p={1291} f="mag" />
      <Summary a={1261} b={1545} y={411} p={1287} f="brick" />
      <Bar a={1261} b={1346} y={450} f="brick" p={13} ph={12} mark />
      <Bar a={1353} b={1397} y={489} f="brick" p={14} ph={22} />
      <Bar a={1396} b={1433} y={527} f="brick" />
      <Bar a={1432} b={1445} y={566} f="brick" />
      <Bar a={1532} b={1545} y={566} f="brick" />
      <path d="M1261 334h1v23h-1z" />

      {/* holiday bands cover the bars that run through them */}
      <path d="M1292 250h38v230h-38z" fill="url(#hatch)" />
      <path d="M1311 250h1v230h-1z" fill="#808080" />
      <path d="M1315.500 163V480" stroke="#00f" strokeDasharray={dash} />
      <path d="M1292 352l36 17" stroke="#000" strokeDasharray="4 2" />

      <path d="M1070 211l7 8-11 1zM1090 211l8 7-10 0zM1206 287h9l-5 9h-12z" />
      <Down x={1233} y={296} /><Down x={1229} y={334} />
      <path d="M1260 325l2 9-9-3z" />
      <Down x={1261} y={373} /><Down x={1261} y={450} />
      <path d="M1328 364h11l-7 9h-8z" />
      <Down x={1337} y={450} />
      <path d="M1346 480h13l-5 9h-2z" />
      <Down x={1389} y={489} /><Down x={1396} y={527} /><Down x={1424} y={527} /><Down x={1432} y={566} />
      <path d="M1448 595l10 1-5 7h-5l-4-4z" />
      <path d="M1532 588l5 9h-10z" />
      {[[865, 198], [1015, 198], [1066, 237], [1229, 237], [1253, 392], [1460, 392]].map(([x, y]) => (
        <Plus key={x} x={x} y={y} />
      ))}
    </g>
  </svg>
);

/* ---------- graphs ---------- */

const monthly = [879, 16796, 22519, 53442, 42209, 64261, 114696, 112205, 127385, 174531, 135119];
const netto = "1090,751 1090,752 1108,754 1120,756 1144,759 1172,760 1192,762 1215,763 1232,764 1251,766 1271,767 1299,770 1315,772 1340,773 1349,774 1356,777 1381,782 1406,787 1437,795 1442,797 1450,797 1451,777 1466,779 1468,774 1473,775 1486,778 1505,782 1537,791 1540,788 1542,788 1544,766 1549,767 1550,764 1570,770 1592,771 1609,782 1611,761 1628,769 1629,764 1657,779 1683,791 1685,782 1697,785 1698,782 1710,787 1712,752 1726,753 1741,754 1743,729 1750,727 1770,727";
const total = "896,919 944,918 1006,917 1039,916 1077,915 1110,913 1137,911 1172,910 1210,907 1232,906 1261,904 1292,901 1332,900 1371,894 1406,889 1430,885 1486,878 1530,871 1570,866 1595,864 1611,859 1657,848 1695,839 1716,835 1736,834 1770,834";
const fmt = (n: number) => n.toString().replace(/\B(?=(\d{3})+$)/g, ".");

type Graph = {
  top: number; h: number; type: string; caption: string; values: string[];
  axis: [number, string][]; phase: number; under?: React.ReactNode; unit?: boolean;
};
const graphs: Graph[] = [
  {
    top: 608, h: 72, type: "Maandelijkse cumulat", caption: "Kosten tot nu", phase: 20,
    values: monthly.map(fmt),
    axis: [[615, "200.000"], [672, "0"]],
    under: monthly.map((v, i) => {
      const h = Math.max(1, Math.round((v * 57) / 200000));
      return <path key={i} d={`M${i ? monthX[i - 1] : LEFT} ${672 - h}h${monthW[i]}v${h}h-${monthW[i]}z`} fill="#f00" />;
    }),
  },
  {
    top: 697, h: 109, type: "Netto cashflow", caption: "Netto Kosten tot nu", phase: 33,
    values: ["887", "4.398", "2.094", "-31.041", "-51.916", "-83.835", "-153.538", "-113.209", "-79.453", "-116.058", "101.045"],
    axis: [[704, "200.000"], [751, "0"], [798, "-200.000"]],
    under: (
      <>
        <polygon points={`${netto} 1770,751`} fill="url(#red)" />
        <polyline points={netto} fill="none" stroke="#f00" />
        <path d="M910 750h3v1h-3zM930 750h3v1h-3zM942 750h72v1h-72zM1045 750h7v1h-7zM1057 750h19v1h-19z" fill="#f00" />
      </>
    ),
  },
  {
    top: 823, h: 105, type: "Totale kosten", caption: "€", phase: 0, unit: true,
    values: ["879", "17.675", "40.194", "93.636", "135.845", "200.106", "314.802", "427.008", "554.393", "728.924", "864.044"],
    axis: [[840, "800.000"], [860, "600.000"], [880, "400.000"], [900, "200.000"], [920, "0"]],
    under: (
      <>
        <polygon points={`${total} 1770,920 896,920`} fill="url(#red)" />
        <polyline points={total} fill="none" stroke="#f00" />
      </>
    ),
  },
];

const GraphPanel = ({ g, n }: { g: Graph; n: number }) => (
  <GraphRow $h={g.h + 17}>
    <GraphLeft>
      <GraphTop>
        <GraphBar>
          <GraphNo $on={n === 1}>{n}</GraphNo>
          <Sep $l={1} $r={3} />
          <Combo $w={160}>
            <Bank />
            <Select aria-label="Kostengroep"><option>Project Kosten</option></Select>
            <Arrow />
          </Combo>
          <Combo $w={150}>
            <ChartIcon />
            <Select aria-label="Grafiek"><option>{g.type}</option></Select>
            <Arrow />
          </Combo>
          <Sep $l={2} $r={3} />
          <ToolButton aria-label="Rapport"><ReportCheck /></ToolButton>
          <ToolButton aria-label="Opmaak"><ChartPen /></ToolButton>
          <Sep $l={2} $r={3} />
          <ToolButton aria-label="Splitsen"><SplitIcon /></ToolButton>
          <ToolButton aria-label="Venster"><ChartWin /></ToolButton>
          <ToolButton aria-label="Toevoegen"><ChartAdd /></ToolButton>
          <ToolButton aria-label="Verwijderen"><ChartDel /></ToolButton>
        </GraphBar>
        <svg width="130" height={g.h} fontFamily={arial} fontSize="12" textAnchor="end">
          <g transform={`translate(-692 -${g.top})`}>
            {g.axis.map(([y, t]) => (
              <g key={y}>
                <text x="817" y={y + 4}>{t}</text>
                <path d={`M818 ${y}h4v1h-4z`} shapeRendering="crispEdges" />
              </g>
            ))}
            {g.unit && <text transform="translate(769 885) rotate(-90)">€</text>}
          </g>
        </svg>
      </GraphTop>
      <GraphCaption>{g.caption}</GraphCaption>
    </GraphLeft>
    <Divider />
    <GraphRight>
      <svg width="100%" height={g.h} shapeRendering="crispEdges" role="img" aria-label={g.type}>
        <g transform={`translate(-826 -${g.top})`}>
          {g.under}
          {weeks.map((x) => <path key={x} d={`M${x} ${g.top}h1v${g.h}h-1z`} fill="#808080" />)}
          {g.axis.map(([y]) => <path key={y} d={`M826 ${y}h2000v1H826z`} />)}
          {monthX.map((x) => (
            <path key={x} d={`M${x + 0.5} ${g.top}V${g.top + g.h}`} stroke="#00f" strokeDasharray={dash} strokeDashoffset={g.phase} />
          ))}
        </g>
      </svg>
      <Values>
        {g.values.map((v, i) => <Value key={i} $w={monthW[i] + (i ? 0 : 1)}>{v}</Value>)}
      </Values>
    </GraphRight>
  </GraphRow>
);

const StatusCombo = ({ w, v, label, icon }: { w: number; v: string; label: string; icon?: React.ReactNode }) => (
  <Combo $w={w}>
    {icon}
    <Select aria-label={label}><option>{v}</option></Select>
    <Arrow />
  </Combo>
);

export default function App() {
  return (
    <Shell>
      <Global />
      <Ribbon>
        <QuickBar>
          <QuickButton $w={26} aria-label="Powerproject"><Diamond /></QuickButton>
          <QuickButton aria-label="Opslaan"><Save /></QuickButton>
          <QuickButton aria-label="Ongedaan maken"><Undo c="#2f66ad" /></QuickButton>
          <QuickButton $w={11} aria-label="Meer"><Arrow $c="#fff" /></QuickButton>
          <QuickButton aria-label="Opnieuw"><Undo c="#9aa7b8" flip /></QuickButton>
          <QuickButton $w={11} aria-label="Meer"><Arrow $c="#a9bcd8" /></QuickButton>
          <QuickButton aria-label="Omhoog"><UpArrow /></QuickButton>
          <QuickButton aria-label="Bibliotheek"><Books /></QuickButton>
          <QuickButton aria-label="Afdrukken"><PrintGrid /></QuickButton>
          <QuickButton aria-label="Controleren"><DocCheck /></QuickButton>
          <QuickButton aria-label="Passend maken"><FitIcon /></QuickButton>
          <QuickButton $w={11} aria-label="Meer"><Arrow $c="#fff" /></QuickButton>
          <QuickButton aria-label="Zoeken"><Finder /></QuickButton>
          <QuickCombo $w={128}>
            <Select aria-label="Eenheid"><option>Uren</option></Select>
            <Arrow />
          </QuickCombo>
          <QuickButton aria-label="Toewijzen"><Reassign /></QuickButton>
          <QuickButton $w={11} aria-label="Meer"><Arrow $c="#fff" /></QuickButton>
          <QuickButton $w={11} aria-label="Aanpassen">
            <Svg w={9} h={8}><path d="M0 0h8v1H0zM0 3h8L4 7z" fill="#fff" /></Svg>
          </QuickButton>
          <BalTab>Bal...</BalTab>
          <Title>Powerproject - Kosten\Kosten en Financiele Grafieken - 2 Verdiepingen kantoorblok voorbeeld (2 verdiepingen kantoorblok.pp) \Bouw</Title>
        </QuickBar>
        <Menu>
          <MenuItem $dim>Bestand</MenuItem>
          <MenuItem>Start</MenuItem>
          <MenuItem>View</MenuItem>
          <MenuItem>Project</MenuItem>
          <MenuItem>Allocatie</MenuItem>
          <MenuItem $push={17}>BIM</MenuItem>
          <MenuItem>Opmaak</MenuItem>
        </Menu>
      </Ribbon>
      <TabStrip>
        <DocTab>
          Kosten\Kosten en Financiele G...
          <button aria-label="Sluiten">
            <Svg w={10} h={10}><path d="M1 1l8 8M9 1L1 9" stroke="#2b579a" strokeWidth="1.400" /></Svg>
          </button>
        </DocTab>
      </TabStrip>
      <Frame />
      <Work>
        <Upper>
          <Tree />
          <SheetView />
          <Divider />
          <GanttPane>
            <TimeScale />
            <ScaleSplit />
            <GanttChart />
          </GanttPane>
        </Upper>
        <Graphs>
          {graphs.map((g, i) => <GraphPanel key={g.type} g={g} n={i + 1} />)}
        </Graphs>
        <Filler><Divider /></Filler>
        <ScrollRow>
          <ScrollLeft>
            <HScroll>
              <ScrollButton aria-label="Links"><Chevron dir="left" /></ScrollButton>
              <Track $before={0}><Thumb /></Track>
              <ScrollButton aria-label="Rechts"><Chevron dir="right" /></ScrollButton>
            </HScroll>
          </ScrollLeft>
          <ScrollRight>
            <HScroll>
              <ScrollButton aria-label="Links"><Chevron dir="left" /></ScrollButton>
              <Track $before={34}><Thumb $w="75%" /></Track>
              <ScrollButton aria-label="Rechts" />
            </HScroll>
          </ScrollRight>
        </ScrollRow>
      </Work>
      <StatusBar>
        <Grip />
        <StatusCombo w={68} v="30%" label="Zoom" />
        <Sep />
        <StatusButton $w={24} aria-label="Vorige"><HArrow c="#2f63a8" left /></StatusButton>
        <StatusButton $w={24} aria-label="Volgende"><HArrow c="#2f63a8" /></StatusButton>
        <Sep $l={1} $r={3} />
        <StatusButton aria-label="Start eerder"><HArrow c="#5f9c35" left square="r" /></StatusButton>
        <StatusCombo w={115} v="14 januari 2013" label="Startdatum" />
        <StatusButton $w={22} aria-label="Start later"><HArrow c="#5f9c35" square="r" /></StatusButton>
        <Sep />
        <Field aria-label="Duur" defaultValue="3d 2u" />
        <Sep />
        <StatusButton $w={22} aria-label="Einde eerder"><HArrow c="#e0603e" left square="l" /></StatusButton>
        <StatusCombo w={115} v="17 januari 2013" label="Einddatum" />
        <StatusButton aria-label="Einde later"><HArrow c="#e0603e" square="l" /></StatusButton>
        <Sep />
        <StatusCombo w={130} v="Metselen & Co" label="Ploeg" icon={<ListIcon />} />
      </StatusBar>
    </Shell>
  );
}
